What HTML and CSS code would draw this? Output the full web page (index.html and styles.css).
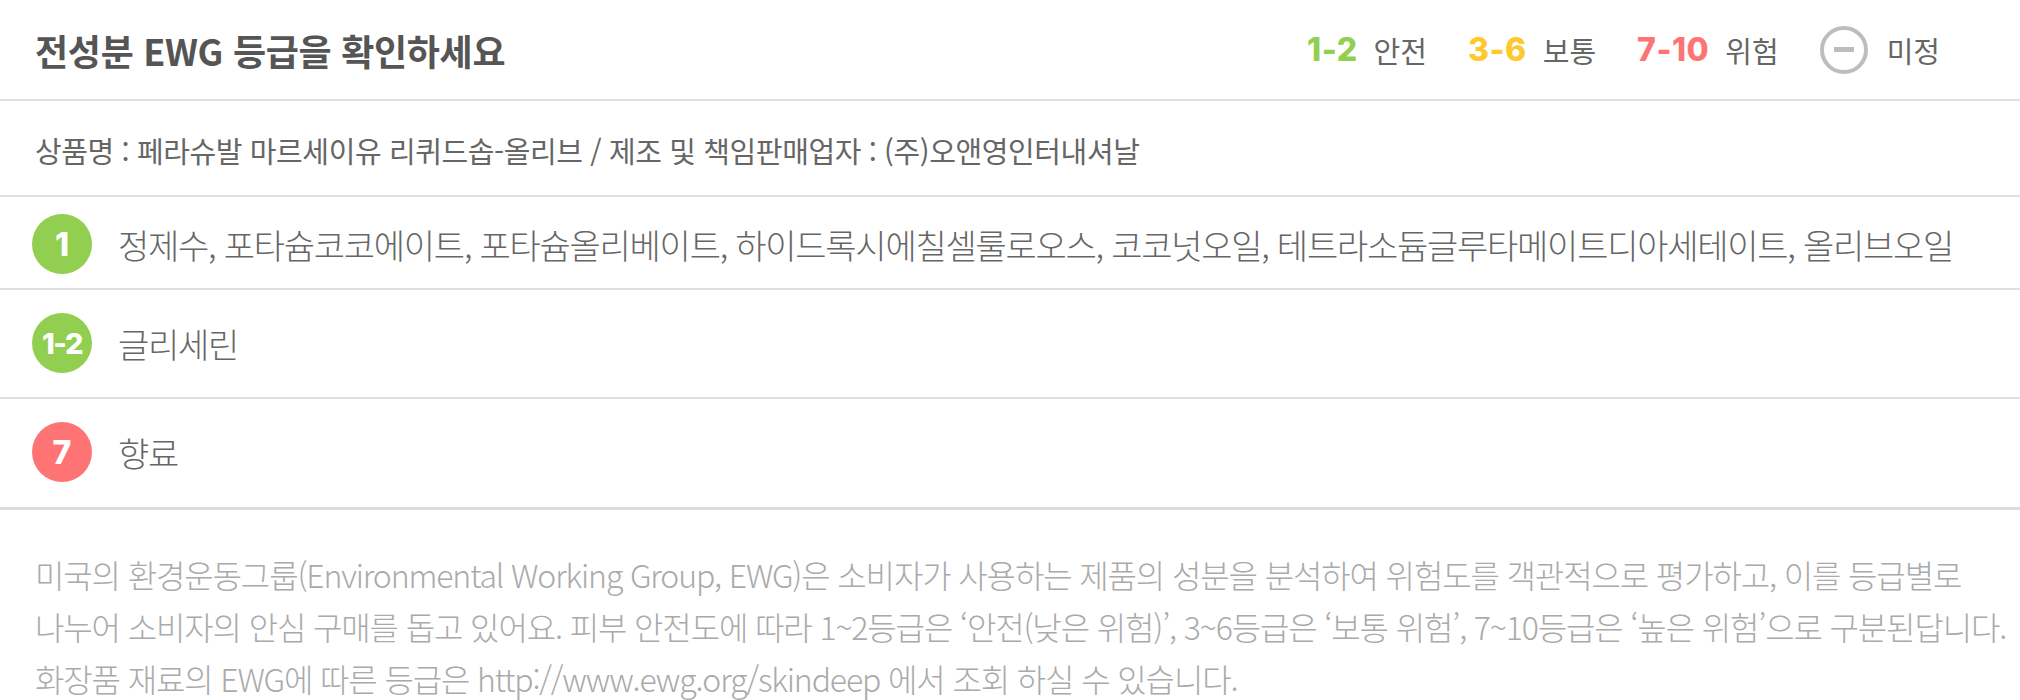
FILE: index.html
```html
<!DOCTYPE html>
<html lang="ko">
<head>
    <meta charset="UTF-8">
    <meta name="viewport" content="width=device-width, initial-scale=1.0">
    <title>전성분 EWG 등급</title>
    <link rel="stylesheet" href="styles.css">
</head>
<body>

    <div class="header">
        <h1>전성분 EWG 등급을 확인하세요</h1>
        <div class="legend">
            <span class="range safe">1-2</span><span class="label">안전</span>
            <span class="range normal">3-6</span><span class="label">보통</span>
            <span class="range danger">7-10</span><span class="label">위험</span>
            <span class="unknown"><span class="dash"></span></span><span class="label">미정</span>
        </div>
    </div>

    <div class="product">
        상품명 : 페라슈발 마르세이유 리퀴드솝-올리브 / 제조 및 책임판매업자 : (주)오앤영인터내셔날
    </div>

    <div class="grades">
        <div class="grade-row first">
            <span class="badge safe-bg">1</span>
            <span class="names">정제수, 포타슘코코에이트, 포타슘올리베이트, 하이드록시에칠셀룰로오스, 코코넛오일, 테트라소듐글루타메이트디아세테이트, 올리브오일</span>
        </div>
        <div class="grade-row">
            <span class="badge safe-bg small">1-2</span>
            <span class="names">글리세린</span>
        </div>
        <div class="grade-row last">
            <span class="badge danger-bg">7</span>
            <span class="names">향료</span>
        </div>
    </div>

    <p class="notice">
        미국의 환경운동그룹(Environmental Working Group, EWG)은 소비자가 사용하는 제품의 성분을 분석하여 위험도를 객관적으로 평가하고, 이를 등급별로<br>
        나누어 소비자의 안심 구매를 돕고 있어요. 피부 안전도에 따라 1~2등급은 ‘안전(낮은 위험)’, 3~6등급은 ‘보통 위험’, 7~10등급은 ‘높은 위험’으로 구분된답니다.<br>
        화장품 재료의 EWG에 따른 등급은 http://www.ewg.org/skindeep 에서 조회 하실 수 있습니다.
    </p>

</body>
</html>
```

FILE: styles.css
```css
body {
    font-family: "Noto Sans CJK KR", "Noto Sans", sans-serif;
    margin: 0;
    padding: 0;
    background-color: #fff;
    color: #555;
}

.header {
    display: flex;
    align-items: center;
    justify-content: space-between;
    height: 99px;
    padding: 0 80px 0 35px;
    border-bottom: 2px solid #e0e0e0;
}

.header h1 {
    font-size: 36px;
    font-weight: 700;
    color: #555;
    margin: 0;
    letter-spacing: -0.3px;
}

.legend {
    display: flex;
    align-items: center;
}

.legend .range {
    font-family: Inter, "Noto Sans", sans-serif;
    font-size: 32px;
    font-weight: 800;
    letter-spacing: 0.5px;
    margin-right: 16px;
}

.legend .label {
    font-size: 29px;
    color: #666;
    margin-right: 41px;
}

.legend .label:last-child {
    margin-right: 0;
}

.safe { color: #92cf50; }
.normal { color: #fdc92e; }
.danger { color: #fe7474; }

.unknown {
    width: 40px;
    height: 40px;
    border: 4px solid #bdbdbd;
    border-radius: 50%;
    display: flex;
    align-items: center;
    justify-content: center;
    margin-right: 19px;
}

.unknown .dash {
    width: 20px;
    height: 5px;
    background-color: #bdbdbd;
}

.product {
    height: 96px;
    display: flex;
    align-items: center;
    padding: 4px 35px 0;
    box-sizing: border-box;
    font-size: 29px;
    letter-spacing: -0.4px;
    color: #666;
    border-bottom: 2px solid #e0e0e0;
}

.grade-row {
    display: flex;
    align-items: center;
    padding: 23px 32px 24px;
    border-bottom: 2px solid #e0e0e0;
}

.grade-row.first {
    padding-top: 17px;
    padding-bottom: 14px;
}

.grade-row.last {
    padding-bottom: 25px;
    border-bottom: 3px solid #dcdcdc;
}

.badge {
    width: 60px;
    height: 60px;
    border-radius: 50%;
    flex-shrink: 0;
    display: flex;
    align-items: center;
    justify-content: center;
    color: #fff;
    font-family: Inter, "Noto Sans", sans-serif;
    font-weight: 800;
    font-size: 32px;
    margin-right: 26px;
}

.badge.small {
    font-size: 29px;
    letter-spacing: -1.5px;
}

.safe-bg { background-color: #92cf50; }
.danger-bg { background-color: #fe7474; }

.names {
    font-size: 34px;
    font-weight: 300;
    letter-spacing: -1.25px;
    color: #666;
    white-space: nowrap;
}

.notice {
    margin: 0;
    padding: 38px 20px 0 35px;
    font-size: 32px;
    font-weight: 300;
    letter-spacing: -1.15px;
    line-height: 52px;
    color: #aaa;
    white-space: nowrap;
}
```
